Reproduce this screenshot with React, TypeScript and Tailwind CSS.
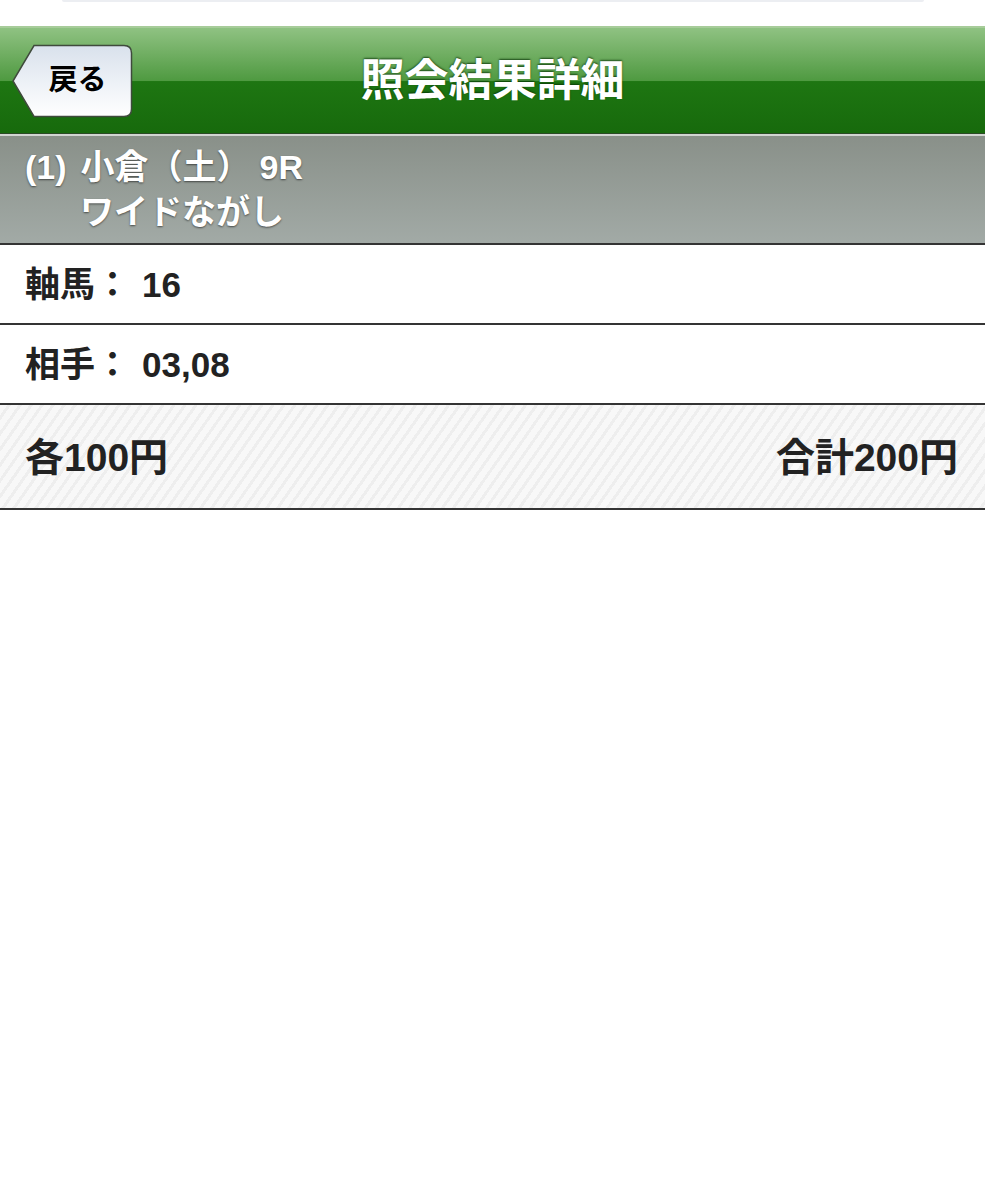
import React from "react";

function BackButton() {
  return (
    <div className="relative w-[121px] h-[74px]">
      <svg width="121" height="74" viewBox="0 0 121 74" className="block">
        <defs>
          <linearGradient id="bb" x1="0" y1="0" x2="0" y2="1">
            <stop offset="0" stopColor="#d9e1ec" />
            <stop offset="0.55" stopColor="#eef2f7" />
            <stop offset="1" stopColor="#ffffff" />
          </linearGradient>
        </defs>
        <path
          d="M22 1.5 H112 Q119.5 1.5 119.5 9 V65 Q119.5 72.5 112 72.5 H22 L1 37 Z"
          fill="url(#bb)"
          stroke="#3f4a3c"
          strokeWidth="1.5"
        />
      </svg>
      <div className="absolute inset-0 flex items-center justify-center pl-[10px] text-[29px] font-bold text-black [text-shadow:0_1px_0_rgba(255,255,255,0.8)]">
        戻る
      </div>
    </div>
  );
}

export default function App() {
  return (
    <div
      className="w-[985px] min-h-[1200px] bg-white text-[#222]"
      style={{ fontFamily: '"Liberation Sans", "Noto Sans CJK JP", sans-serif' }}
    >
      <div className="h-[26px] flex justify-center">
        <div className="w-[862px] h-[2px] rounded-b-[6px] bg-[#eceef2]" />
      </div>

      <header className="h-[108px] border-t-2 border-t-[#a7cc9a] border-b border-b-[#2a4a24] bg-[linear-gradient(to_bottom,#8fc282_0%,#70ae62_25%,#4f9a41_50%,#1e7612_51%,#176a0c_100%)] grid grid-cols-[1fr_auto_1fr] items-center">
        <div className="pl-[12px] pt-[1px]">
          <BackButton />
        </div>
        <h1 className="text-[44px] font-bold text-white leading-none [text-shadow:0_-1px_2px_rgba(0,40,0,0.75)]">
          照会結果詳細
        </h1>
        <div />
      </header>

      <section className="border-t-2 border-t-[#d2d5d2] border-b-2 border-b-[#343434] bg-[linear-gradient(to_bottom,#899089,#a2aaa6)] pt-[9px] pb-[8px] pl-[25px] text-white font-bold text-[34px] leading-[45px] [text-shadow:0_1px_2px_rgba(0,0,0,0.55)]">
        <div>
          (1)<span className="ml-[14px]">小倉（土）</span>
          <span className="ml-[9px]">9R</span>
        </div>
        <div className="pl-[55px]">ワイドながし</div>
      </section>

      <div className="h-[80px] border-b-2 border-b-[#343434] flex items-center pl-[25px] pt-[3px] text-[35px] font-bold">
        <span>軸馬：</span>
        <span className="ml-[12px]">16</span>
      </div>
      <div className="h-[80px] border-b-2 border-b-[#343434] flex items-center pl-[25px] pt-[3px] text-[35px] font-bold">
        <span>相手：</span>
        <span className="ml-[12px]">03,08</span>
      </div>

      <div className="h-[105px] border-b-2 border-b-[#343434] bg-[repeating-linear-gradient(125deg,#f8f8f8_0px,#f8f8f8_6px,#eeeeee_6px,#eeeeee_9px)] flex items-center justify-between pl-[25px] pr-[27px] pt-[4px] text-[39px] font-bold">
        <span>各100円</span>
        <span>合計200円</span>
      </div>
    </div>
  );
}
